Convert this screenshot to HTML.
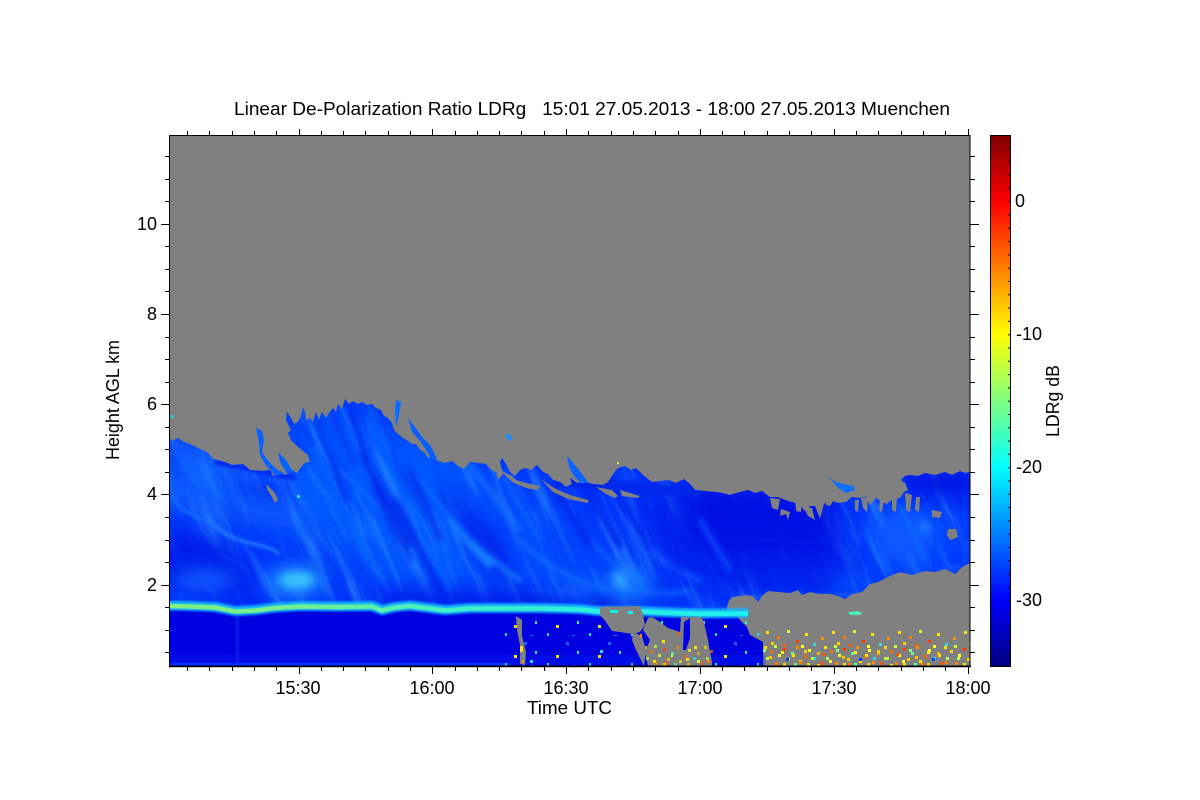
<!DOCTYPE html>
<html lang="en">
<head>
<meta charset="utf-8">
<title>Linear De-Polarization Ratio LDRg</title>
<style>
html,body{margin:0;padding:0;background:#fff;width:1200px;height:800px;overflow:hidden}
svg{display:block}
text{font-family:"Liberation Sans",sans-serif;font-size:18px;fill:#000}
</style>
</head>
<body>
<svg xmlns="http://www.w3.org/2000/svg" width="1200" height="800" viewBox="0 0 1200 800">
<defs>
<linearGradient id="jet" x1="0" y1="0" x2="0" y2="1">
<stop offset="0" stop-color="#800000"/>
<stop offset=".125" stop-color="#ff0000"/>
<stop offset=".375" stop-color="#ffff00"/>
<stop offset=".5" stop-color="#80ff80"/>
<stop offset=".625" stop-color="#00ffff"/>
<stop offset=".875" stop-color="#0000ff"/>
<stop offset="1" stop-color="#000080"/>
</linearGradient>
<linearGradient id="line" gradientUnits="userSpaceOnUse" x1="169" y1="0" x2="748" y2="0">
<stop offset="0" stop-color="#80f080"/>
<stop offset=".25" stop-color="#70f090"/>
<stop offset=".5" stop-color="#40f0c8"/>
<stop offset=".75" stop-color="#28f0e0"/>
<stop offset="1" stop-color="#20f0f0"/>
</linearGradient>
<filter id="b1" x="-5%" y="-200%" width="110%" height="500%"><feGaussianBlur stdDeviation="1"/></filter>
<filter id="b2" x="-20%" y="-20%" width="140%" height="140%"><feGaussianBlur stdDeviation="1.6"/></filter>
<filter id="b3" x="-20%" y="-20%" width="140%" height="140%"><feGaussianBlur stdDeviation="2.8"/></filter>
<filter id="b4" x="-20%" y="-20%" width="140%" height="140%"><feGaussianBlur stdDeviation="4"/></filter>
<filter id="b9" x="-30%" y="-30%" width="160%" height="160%"><feGaussianBlur stdDeviation="9"/></filter>
<filter id="b18" x="-30%" y="-30%" width="160%" height="160%"><feGaussianBlur stdDeviation="16"/></filter>
<filter id="txl" x="0" y="0" width="1" height="1"><feTurbulence type="fractalNoise" baseFrequency=".07 .012" numOctaves="3" seed="4"/><feColorMatrix type="matrix" values="0 0 0 0 .06  0 0 0 0 .45  0 0 0 0 1  1.3 0 0 0 -.62"/></filter>
<filter id="txd" x="0" y="0" width="1" height="1"><feTurbulence type="fractalNoise" baseFrequency=".06 .012" numOctaves="3" seed="11"/><feColorMatrix type="matrix" values="0 0 0 0 0  0 0 0 0 .04  0 0 0 0 .88  1.4 0 0 0 -.64"/></filter>
<clipPath id="plot"><rect x="169" y="135" width="801" height="531"/></clipPath>
<clipPath id="cloud"><polygon points="169,437 172,441 178,438 184,442 190,444 200,449 208,453 213,459 222,461 232,465 243,464 250,470 262,471 270,470 273,476 280,473 286,475 292,470 297,473 302,466 306,462 310,462 308,455 303,451 297,446 291,440 288,433 291,430 286,420 287,412 291,418 294,424 298,422 301,416 303,407 305,412 306,420 310,418 313,422 316,412 319,420 322,412 326,418 329,413 333,408 336,412 338,404 342,409 345,399 349,404 353,401 358,404 362,402 367,405 372,404 376,408 381,410 384,416 388,418 392,423 394,430 398,434 403,438 408,441 412,444 416,444 420,450 424,452 428,458 432,456 438,461 445,463 452,461 458,466 464,469 470,462 478,463 486,464 491,470 496,472 498,480 503,474 500,462 502,458 506,464 510,472 515,476 520,470 526,468 531,470 537,465 543,472 548,474 553,480 560,482 566,487 572,484 570,478 577,483 585,482 593,484 603,485 608,482 616,470 618,468 625,466 631,470 636,468 644,476 652,482 660,481 668,480 676,483 684,479 690,484 695,490 705,491 715,492 722,493 730,495 740,492 748,490 755,493 762,491 770,497 778,497 785,500 795,503 800,503 804,511 810,506 815,506 820,519 824,504 830,500 838,503 846,502 852,497 860,498 866,497 870,505 876,498 882,502 887,504 893,499 900,498 904,492 908,490 905,483 901,480 905,476 910,475 918,476 925,473 935,475 945,472 952,475 960,471 965,473 970,472 970,563 962,567 955,574 945,569 935,572 925,571 912,575 900,572 890,576 878,582 870,584 862,592 852,594 845,599 838,596 830,594 820,594 810,592 802,595 798,590 790,593 778,592 768,591 762,596 758,602 753,596 745,595 733,597 729,600 727,607 727,614 169,614"/></clipPath>
<pattern id="sp1" width="66" height="18" patternUnits="userSpaceOnUse" x="763" y="630">
<rect x="3" y="1" width="3" height="3" fill="#ffe000"/><rect x="14" y="6" width="3" height="3" fill="#ff8000"/><rect x="24" y="0" width="3" height="3" fill="#c8ff30"/>
<rect x="33" y="10" width="3" height="3" fill="#ff4000"/><rect x="42" y="3" width="3" height="3" fill="#ffe000"/><rect x="50" y="13" width="3" height="3" fill="#30e0e0"/>
<rect x="58" y="7" width="3" height="3" fill="#ff9000"/><rect x="8" y="12" width="3" height="3" fill="#ffd000"/><rect x="20" y="14" width="3" height="3" fill="#ff6000"/><rect x="38" y="15" width="3" height="3" fill="#ffff20"/>
</pattern>
<pattern id="sp2" width="60" height="21" patternUnits="userSpaceOnUse" x="763" y="645">
<rect x="1" y="1" width="3" height="3" fill="#ffe000"/><rect x="7" y="5" width="3" height="3" fill="#ff7000"/><rect x="11" y="0" width="3" height="3" fill="#c8ff30"/>
<rect x="15" y="9" width="3" height="3" fill="#ffff20"/><rect x="20" y="3" width="3" height="3" fill="#ff4000"/><rect x="24" y="13" width="3" height="3" fill="#ffd000"/>
<rect x="28" y="7" width="3" height="3" fill="#60ff90"/><rect x="33" y="1" width="3" height="3" fill="#ff9000"/><rect x="36" y="15" width="3" height="3" fill="#ffe000"/>
<rect x="41" y="10" width="3" height="3" fill="#ff6000"/><rect x="45" y="4" width="3" height="3" fill="#ffff20"/><rect x="50" y="12" width="3" height="3" fill="#20e0f0"/>
<rect x="54" y="7" width="3" height="3" fill="#ffb000"/><rect x="57" y="17" width="3" height="3" fill="#ff5000"/><rect x="3" y="12" width="3" height="3" fill="#b0ff50"/>
<rect x="12" y="17" width="3" height="3" fill="#ff8000"/><rect x="20" y="18" width="3" height="3" fill="#ffe000"/><rect x="31" y="18" width="3" height="3" fill="#50ffa0"/><rect x="44" y="18" width="3" height="3" fill="#ffd000"/>
</pattern>
<pattern id="sp2b" width="73" height="21" patternUnits="userSpaceOnUse" x="790" y="648">
<rect x="2" y="6" width="3" height="3" fill="#ffe800"/><rect x="9" y="13" width="3" height="3" fill="#ff8000"/><rect x="14" y="2" width="3" height="3" fill="#ffd000"/>
<rect x="21" y="9" width="3" height="3" fill="#c0ff40"/><rect x="27" y="16" width="3" height="3" fill="#ffe000"/><rect x="33" y="5" width="3" height="3" fill="#ff5000"/>
<rect x="39" y="12" width="3" height="3" fill="#ffff30"/><rect x="46" y="1" width="3" height="3" fill="#80ff80"/><rect x="52" y="8" width="3" height="3" fill="#ffc000"/>
<rect x="58" y="15" width="3" height="3" fill="#ff7000"/><rect x="64" y="3" width="3" height="3" fill="#ffee10"/><rect x="69" y="10" width="3" height="3" fill="#0040ff"/>
</pattern>
<pattern id="sp3" width="42" height="30" patternUnits="userSpaceOnUse" x="500" y="630">
<rect x="5" y="3" width="2" height="3" fill="#20e0f0"/><rect x="24" y="12" width="3" height="3" fill="#2060ff"/><rect x="35" y="21" width="2" height="3" fill="#30f0e0"/><rect x="14" y="25" width="3" height="3" fill="#ffe000"/><rect x="30" y="5" width="3" height="1" fill="#1080ff"/>
</pattern>
</defs>

<rect width="1200" height="800" fill="#fff"/>
<rect x="169" y="135" width="801" height="531" fill="#808080"/>

<g clip-path="url(#plot)">
<!-- cloud body -->
<g clip-path="url(#cloud)">
<rect x="169" y="395" width="801" height="225" fill="#0034fa"/>
<!-- broad light areas -->
<g filter="url(#b18)">
<polygon points="160,430 300,470 300,530 230,520 160,510" fill="#0a62ff"/>
<polygon points="285,400 440,440 520,500 560,580 400,590 300,540" fill="#0656ff"/>
<polygon points="480,470 560,500 620,590 520,600 470,540" fill="#0648ff"/>
<polygon points="850,520 960,490 970,560 870,575" fill="#0442ff"/>
</g>
<!-- oriented streak texture, sheared to follow the fall streaks -->
<g transform="skewX(24)">
<rect x="-110" y="395" width="910" height="225" filter="url(#txl)"/>
<rect x="-110" y="395" width="910" height="225" filter="url(#txd)"/>
</g>
<!-- broad dark areas -->
<g filter="url(#b18)" fill="#0012e6" opacity=".85">
<polygon points="160,525 215,545 240,590 160,570"/>
<polygon points="640,490 840,510 850,590 740,590 680,570"/>
</g>
<g filter="url(#b9)" fill="#0016e8" opacity=".85">
<polygon points="225,475 285,482 285,505 245,500" fill="#0030f4"/>
<polygon points="165,540 240,565 260,600 170,575"/>
<polygon points="380,592 620,594 620,620 380,620"/>
<polygon points="440,480 500,540 520,590 480,560"/>
<polygon points="690,480 830,495 830,545 700,540" fill="#000ee2"/>
<polygon points="900,470 975,470 975,498 905,498" fill="#000ee2"/>
</g>
<!-- light patches -->
<g filter="url(#b9)">
<ellipse cx="295" cy="581" rx="30" ry="15" fill="#1c90ff"/>
<ellipse cx="628" cy="584" rx="24" ry="16" fill="#1480ff"/>
<ellipse cx="575" cy="590" rx="24" ry="8" fill="#0c66ff"/>
<ellipse cx="205" cy="580" rx="32" ry="12" fill="#0a58ff"/>
<ellipse cx="905" cy="535" rx="30" ry="26" fill="#0a58ff"/>
<ellipse cx="850" cy="585" rx="22" ry="6" fill="#0a58ff"/>
</g>
<g filter="url(#b4)">
<ellipse cx="297" cy="580" rx="17" ry="8" fill="#38c0ff"/>
<ellipse cx="622" cy="578" rx="8" ry="9" fill="#30a8ff"/>
<ellipse cx="925" cy="527" rx="5" ry="6" fill="#1c80ff"/>
</g>
<!-- fall streaks, light -->
<g filter="url(#b3)" fill="none" stroke="#0e66ff" stroke-linecap="round">
<path d="M345,412 L370,480 L420,560" stroke-width="4"/>
<path d="M368,410 L395,480 L430,535" stroke-width="3"/>
<path d="M312,440 L340,500 L365,555" stroke-width="3"/>
<path d="M340,470 L420,545 L450,585" stroke-width="4"/>
<path d="M450,520 Q470,545 490,565" stroke="#1c88ff" stroke-width="6"/>
<path d="M470,540 Q490,560 520,580" stroke="#1478ff" stroke-width="5"/>
<path d="M520,540 Q560,580 610,590" stroke-width="5"/>
<path d="M590,540 Q610,560 630,580 T690,590" stroke-width="4"/>
<path d="M640,540 Q670,570 700,580" stroke="#0a50ff" stroke-width="5"/>
<path d="M410,470 L470,540" stroke-width="4"/>
<path d="M700,520 L730,570" stroke="#0a46ff" stroke-width="5"/>
<path d="M900,505 L925,560" stroke="#0f68ff" stroke-width="4"/>
<path d="M870,520 L890,570" stroke="#0c58ff" stroke-width="5"/>
<path d="M500,470 L540,540" stroke="#1068ff" stroke-width="4"/>
<path d="M470,465 L520,530" stroke="#1470ff" stroke-width="5"/>
</g>
<g filter="url(#b2)" fill="none" stroke-linecap="round">
<path d="M208,517 Q222,537 250,543 T278,554" stroke="#2480ff" stroke-width="3"/>
<path d="M172,497 Q180,512 205,520" stroke="#0e66ff" stroke-width="4"/>
</g>
<!-- fall streaks, dark -->
<g filter="url(#b3)" fill="none" stroke="#0420ea" stroke-linecap="round">
<path d="M303,410 L312,445" stroke-width="2.5"/>
<path d="M316,420 L345,500" stroke-width="3"/>
<path d="M332,415 L355,465" stroke-width="2.5"/>
<path d="M350,410 L380,500 L410,560" stroke-width="4"/>
<path d="M362,455 L410,545" stroke-width="5"/>
<path d="M410,470 L440,540" stroke-width="4"/>
<path d="M395,500 L440,590" stroke-width="5"/>
<path d="M555,490 L590,545" stroke-width="5"/>
<path d="M585,490 L620,545" stroke-width="5"/>
<path d="M610,480 L650,550" stroke-width="4"/>
<path d="M640,490 L680,570" stroke-width="4"/>
</g>
<path d="M215,462 L295,478" stroke="#0426ee" stroke-width="5" fill="none" filter="url(#b2)"/>
<path d="M553,480 L700,494" stroke="#0626ea" stroke-width="12" fill="none" filter="url(#b2)"/>
<!-- lower fringe of cloud, right -->
<path d="M730,598 L760,598 L860,594 L960,566" stroke="#0a50ff" stroke-width="5" fill="none" filter="url(#b2)"/>
</g>

<!-- gray holes at cloud top -->
<g fill="#808080">
<polygon points="266,484 270,488 274,492 278,499 275,503 272,497 268,491"/>
<polygon points="500,470 512,476 516,480 530,484 540,486 537,490 526,488 512,482"/>
<polygon points="540,478 548,484 556,489 570,495 588,500 588,503 568,499 553,492"/>
<polygon points="596,487 612,490 618,496 615,498 606,494"/>
<polygon points="620,490 640,496 638,498 622,496"/>
<polygon points="781,509 790,512 788,520 786,514 780,516"/>
<polygon points="803,506 812,508 815,520 808,516"/>
<polygon points="855,500 859,500 858,512 855,510"/>
<polygon points="861,498 868,498 867,512 863,508"/>
<polygon points="880,500 884,500 882,512 879,510"/>
<polygon points="892,498 897,498 896,512 892,510"/>
<polygon points="905,493 912,495 910,512 906,510"/>
<polygon points="916,497 920,497 919,512 915,510"/>
<polygon points="932,510 942,512 940,518 932,517"/>
<polygon points="948,529 956,529 958,537 950,540 947,535"/>
<polygon points="770,498 780,499 778,510 772,508"/>
<polygon points="795,498 802,503 801,512 796,511"/>
<polygon points="826,498 834,500 830,506 826,505"/>
</g>

<!-- detached cloud wisps -->
<g fill="#0a60ff">
<polygon points="256,428 262,431 264,440 262,452 266,458 272,465 278,470 284,473 276,476 270,470 265,464 260,455 259,442"/>
<polygon points="278,452 286,460 292,470 287,474 280,462"/>
<polygon points="396,400 401,402 400,410 398,420 396,427 395,412" fill="#0c6cff"/>
<polygon points="408,418 415,427 422,437 430,445 437,458 432,460 426,450 420,441 412,432" fill="#0a60ff"/>
<polygon points="505,434 510,434 513,441 508,440" fill="#2a8cff"/>
<polygon points="567,456 574,464 582,474 588,482 582,484 574,476 569,467" fill="#0c64ff"/>
<polygon points="829,477 834,481 843,484 854,486 855,490 846,493 838,488" fill="#1070ff"/>
<rect x="171" y="415" width="3" height="3" fill="#20c8e0"/>
<rect x="297" y="495" width="3" height="3" fill="#30d8f0"/>
<rect x="617" y="462" width="2" height="2" fill="#e8e020"/>
</g>

<!-- below aerosol top -->
<polygon points="169,610 735,612 740,620 747,627 750,635 763,642 763,666 169,666" fill="#0000e0"/>
<rect x="169" y="655" width="594" height="11" fill="#0008e8" filter="url(#b2)"/>
<rect x="236" y="612" width="3" height="54" fill="#0820f0" filter="url(#b2)"/>
<rect x="169" y="663" width="340" height="3" fill="#0230ff"/>
<rect x="500" y="620" width="263" height="46" fill="url(#sp3)"/>

<!-- aerosol / melting layer band -->
<path d="M169,605.5 L190,606 L215,607 L235,611 L255,610 L275,607.5 L300,606 L340,606.5 L372,606 L382,610 L395,607 L410,605.5 L430,608 L445,610 L470,608 L500,608 L540,608 L580,609 L600,611 L640,611 L660,612 L700,613.5 L748,613" fill="none" stroke="#18b8ff" stroke-width="9.5" filter="url(#b1)"/>
<path d="M169,606 L190,606.5 L215,607.5 L235,611.5 L255,610.5 L275,608 L300,606.5 L340,607 L372,606.5 L382,610.5 L395,607.5 L410,606 L430,608.5 L445,610.5 L470,608.5 L500,608.5 L540,608.5 L580,609.5 L600,611.5 L640,611.5 L660,612.5 L700,614 L748,613.5" fill="none" stroke="url(#line)" stroke-width="4.5"/>

<!-- gray below cloud base -->
<g fill="#808080">
<polygon points="600,607 640,606 643,615 645,625 640,632 632,634 620,632 612,631 606,622 600,615"/>
<polygon points="643,630 648,618 652,617 660,622 668,628 680,632 681,617 701,617 704,622 708,640 712,662 712,666 648,666 645,652 650,640"/>
<polygon points="633,632 642,636 646,650 644,666 636,650 632,640"/>
<polygon points="516,616 522,620 522,636 526,652 525,665 520,664 520,645 517,630"/>
</g>
<polygon points="684,622 690,618 690,638 686,650 683,650" fill="#0000e0"/>
<g fill="#10f0e8">
<rect x="610" y="610" width="8" height="3"/><rect x="628" y="611" width="5" height="3"/>
</g>
<polygon points="848,612 858,611 862,613 860,615 850,615" fill="#50f0b0"/>
<g fill="#ffe000">
<rect x="520" y="646" width="3" height="6"/><rect x="522" y="660" width="2" height="3" fill="#ff9000"/>
<rect x="640" y="634" width="2" height="3" fill="#ff9000"/><rect x="662" y="640" width="3" height="3"/>
<rect x="677" y="632" width="2" height="3" fill="#ff6000"/><rect x="694" y="646" width="3" height="3"/>
<rect x="707" y="660" width="3" height="3" fill="#ff8000"/><rect x="686" y="658" width="3" height="3"/>
<rect x="671" y="654" width="2" height="3" fill="#c8ff30"/><rect x="653" y="660" width="3" height="3"/>
<rect x="664" y="662" width="3" height="3" fill="#ff6000"/><rect x="697" y="660" width="3" height="3" fill="#c8ff30"/>
<rect x="530" y="660" width="3" height="3" fill="#20e0e0"/><rect x="600" y="650" width="3" height="3" fill="#20e0e0"/>
</g>

<!-- noisy speckle right -->
<rect x="763" y="630" width="207" height="18" fill="url(#sp1)"/>
<rect x="763" y="645" width="207" height="21" fill="url(#sp2)"/>
<rect x="763" y="648" width="207" height="18" fill="url(#sp2b)"/>
<rect x="645" y="645" width="68" height="21" fill="url(#sp2)" opacity=".7"/>
<rect x="745" y="630" width="18" height="36" fill="url(#sp3)"/>
</g>

<!-- plot frame -->
<rect x="169.5" y="135.5" width="800.5" height="530.5" fill="none" stroke="#000" stroke-width="1"/>
<line x1="169" y1="666.5" x2="971" y2="666.5" stroke="#000" stroke-width="1.4"/>

<g stroke="#000" stroke-width="1" fill="none" shape-rendering="crispEdges">
<path d="M161,224.5H169M161,314.5H169M161,404.5H169M161,494.5H169M161,585.5H169M970,224.5H979M970,314.5H979M970,404.5H979M970,494.5H979M970,585.5H979"/>
<path d="M165,156.5H169M165,179.5H169M165,201.5H169M165,246.5H169M165,269.5H169M165,291.5H169M165,337.5H169M165,359.5H169M165,382.5H169M165,427.5H169M165,449.5H169M165,472.5H169M165,517.5H169M165,540.5H169M165,562.5H169M165,607.5H169M165,630.5H169M165,652.5H169"/>
<path d="M970,156.5H975M970,179.5H975M970,201.5H975M970,246.5H975M970,269.5H975M970,291.5H975M970,337.5H975M970,359.5H975M970,382.5H975M970,427.5H975M970,449.5H975M970,472.5H975M970,517.5H975M970,540.5H975M970,562.5H975M970,607.5H975M970,630.5H975M970,652.5H975"/>
<path d="M299.5,666V674M432.5,666V674M566.5,666V674M700.5,666V674M834.5,666V674M968.5,666V674"/>
<path d="M187.5,666V671M209.5,666V671M232.5,666V671M254.5,666V671M276.5,666V671M321.5,666V671M343.5,666V671M365.5,666V671M388.5,666V671M410.5,666V671M455.5,666V671M477.5,666V671M499.5,666V671M521.5,666V671M544.5,666V671M588.5,666V671M611.5,666V671M633.5,666V671M655.5,666V671M678.5,666V671M722.5,666V671M744.5,666V671M767.5,666V671M789.5,666V671M811.5,666V671M856.5,666V671M878.5,666V671M901.5,666V671M923.5,666V671M945.5,666V671"/>
<path d="M299.5,129V135M432.5,129V135M566.5,129V135M700.5,129V135M834.5,129V135M968.5,129V135"/>
<path d="M187.5,131V135M209.5,131V135M232.5,131V135M254.5,131V135M276.5,131V135M321.5,131V135M343.5,131V135M365.5,131V135M388.5,131V135M410.5,131V135M455.5,131V135M477.5,131V135M499.5,131V135M521.5,131V135M544.5,131V135M588.5,131V135M611.5,131V135M633.5,131V135M655.5,131V135M678.5,131V135M722.5,131V135M744.5,131V135M767.5,131V135M789.5,131V135M811.5,131V135M856.5,131V135M878.5,131V135M901.5,131V135M923.5,131V135M945.5,131V135"/>
</g>

<!-- colour bar -->
<rect x="990.5" y="135.5" width="20" height="531" fill="url(#jet)" stroke="#000" stroke-width="1"/>
<line x1="1009" y1="135" x2="1009" y2="666" stroke="#000" stroke-width="2" stroke-dasharray="1 12.3" stroke-dashoffset="-13"/>

<!-- text -->
<text x="234" y="115" textLength="716" lengthAdjust="spacingAndGlyphs" xml:space="preserve">Linear De-Polarization Ratio LDRg   15:01 27.05.2013 - 18:00 27.05.2013 Muenchen</text>

<g text-anchor="end">
<text x="157" y="230">10</text>
<text x="157" y="320">8</text>
<text x="157" y="410">6</text>
<text x="157" y="500">4</text>
<text x="157" y="591">2</text>
</g>

<g text-anchor="middle">
<text x="298" y="694">15:30</text>
<text x="432" y="694">16:00</text>
<text x="566" y="694">16:30</text>
<text x="700" y="694">17:00</text>
<text x="834" y="694">17:30</text>
<text x="968" y="694">18:00</text>
</g>
<text x="527" y="714" textLength="85" lengthAdjust="spacingAndGlyphs">Time UTC</text>

<text x="0" y="0" text-anchor="middle" transform="translate(119,400) rotate(-90)" textLength="120" lengthAdjust="spacingAndGlyphs">Height AGL km</text>
<text x="0" y="0" text-anchor="middle" transform="translate(1059,401) rotate(-90)" textLength="72" lengthAdjust="spacingAndGlyphs">LDRg dB</text>

<text x="1015" y="207">0</text>
<text x="1016" y="340">-10</text>
<text x="1016" y="473">-20</text>
<text x="1016" y="606">-30</text>
</svg>
</body>
</html>
